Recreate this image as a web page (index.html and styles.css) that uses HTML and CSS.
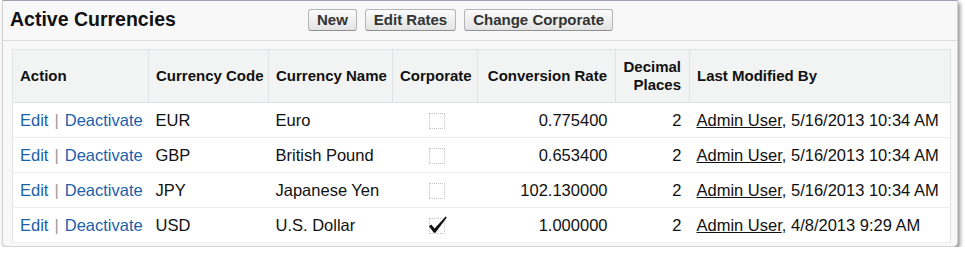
FILE: index.html
```html
<!DOCTYPE html>
<html>
<head>
<meta charset="utf-8">
<link rel="stylesheet" href="styles.css">
</head>
<body>
<div class="panel">
  <div class="panel-head">
    <h2 class="title">Active Currencies</h2>
    <div class="buttons">
      <button class="btn">New</button>
      <button class="btn">Edit Rates</button>
      <button class="btn">Change Corporate</button>
    </div>
  </div>
  <table class="list">
    <colgroup>
      <col class="c-action"><col class="c-code"><col class="c-name"><col class="c-corp"><col class="c-rate"><col class="c-dec"><col class="c-mod">
    </colgroup>
    <thead>
      <tr>
        <th>Action</th>
        <th>Currency Code</th>
        <th>Currency Name</th>
        <th>Corporate</th>
        <th class="num">Conversion Rate</th>
        <th class="num">Decimal<br>Places</th>
        <th>Last Modified By</th>
      </tr>
    </thead>
    <tbody>
      <tr>
        <td><a class="act" href="#">Edit</a><span class="sep">|</span><a class="act" href="#">Deactivate</a></td>
        <td>EUR</td><td>Euro</td>
        <td class="chk"><span class="box"></span></td>
        <td class="num">0.775400</td><td class="num">2</td>
        <td><a class="user" href="#">Admin User</a>, 5/16/2013 10:34 AM</td>
      </tr>
      <tr>
        <td><a class="act" href="#">Edit</a><span class="sep">|</span><a class="act" href="#">Deactivate</a></td>
        <td>GBP</td><td>British Pound</td>
        <td class="chk"><span class="box"></span></td>
        <td class="num">0.653400</td><td class="num">2</td>
        <td><a class="user" href="#">Admin User</a>, 5/16/2013 10:34 AM</td>
      </tr>
      <tr>
        <td><a class="act" href="#">Edit</a><span class="sep">|</span><a class="act" href="#">Deactivate</a></td>
        <td>JPY</td><td>Japanese Yen</td>
        <td class="chk"><span class="box"></span></td>
        <td class="num">102.130000</td><td class="num">2</td>
        <td><a class="user" href="#">Admin User</a>, 5/16/2013 10:34 AM</td>
      </tr>
      <tr>
        <td><a class="act" href="#">Edit</a><span class="sep">|</span><a class="act" href="#">Deactivate</a></td>
        <td>USD</td><td>U.S. Dollar</td>
        <td class="chk"><span class="box"><svg class="tick" viewBox="0 0 20 18" width="20" height="18"><path d="M1,10.2 L3.2,8.6 L6.6,12.4 L17.6,0.6 L18.8,1.6 L7.4,16.8 L5.8,16.8 Z" fill="#111"/></svg></span></td>
        <td class="num">1.000000</td><td class="num">2</td>
        <td><a class="user" href="#">Admin User</a>, 4/8/2013 9:29 AM</td>
      </tr>
    </tbody>
  </table>
</div>
</body>
</html>
```
FILE: styles.css
```css
html, body {
  margin: 0;
  padding: 0;
  background: #ffffff;
}
body {
  font-family: "Liberation Sans", Arial, sans-serif;
  color: #111;
  padding: 0 7px 0 2px;
}
.panel {
  background: #f8f8f8;
  border: 1px solid #d4d4d4;
  border-top: 1px solid #9aa2b8;
  border-radius: 0 0 5px 5px;
  box-shadow: 2px 3px 4px rgba(0, 0, 0, 0.45);
  padding: 0 7px 5px 9px;
  height: 247px;
  box-sizing: border-box;
}
.panel-head {
  display: flex;
  align-items: center;
  height: 39px;
  margin: 0 -7px 0 -9px;
  padding-left: 7px;
  border-bottom: 1px solid #dedede;
}
.title {
  margin: 0;
  width: 298px;
  font-size: 19.5px;
  font-weight: bold;
  color: #111;
  padding-bottom: 2px;
}
.buttons {
  display: flex;
  gap: 8px;
  padding-bottom: 1px;
}
.btn {
  font-family: "Liberation Sans", Arial, sans-serif;
  font-size: 15px;
  font-weight: bold;
  color: #333;
  height: 22px;
  padding: 0 8px;
  border: 1px solid #b5b5b5;
  border-bottom-color: #8f8f8f;
  border-radius: 3px;
  background: linear-gradient(#fbfbfb, #e4e4e4);
  line-height: 20px;
}
.list {
  margin-top: 8px;
  width: 938px;
  table-layout: fixed;
  border-collapse: collapse;
  background: #fff;
  border: 1px solid #e0e3e5;
}
.c-action { width: 136px; }
.c-code { width: 120px; }
.c-name { width: 124px; }
.c-corp { width: 85px; }
.c-rate { width: 138px; }
.c-dec { width: 74px; }
.c-mod { width: 261px; }
.list th {
  background: #f2f3f3;
  font-size: 15px;
  font-weight: bold;
  color: #111;
  text-align: left;
  height: 52px;
  padding: 0 7px;
  border-left: 1px solid #e0e3e5;
  border-bottom: 1px solid #e0e3e5;
  line-height: 18px;
  white-space: nowrap;
}
.list th:first-child { border-left: none; }
.list td {
  font-size: 16.5px;
  height: 34px;
  padding: 0 7px;
  border-bottom: 1px solid #ececec;
  white-space: nowrap;
  color: #111;
}
.list .num {
  text-align: right;
  padding-right: 8px;
}
.act {
  color: #1b5fab;
  text-decoration: none;
}
.sep {
  color: #9a9a9a;
  margin: 0 6px;
}
.user {
  color: #111;
  text-decoration: underline;
}
.list td.chk {
  text-align: center;
  padding: 0 0 0 4px;
}
.box {
  position: relative;
  display: inline-block;
  width: 14px;
  height: 14px;
  border: 1px dotted #c4c4c4;
  vertical-align: middle;
}
.tick {
  position: absolute;
  left: -2px;
  top: -3px;
}
```
